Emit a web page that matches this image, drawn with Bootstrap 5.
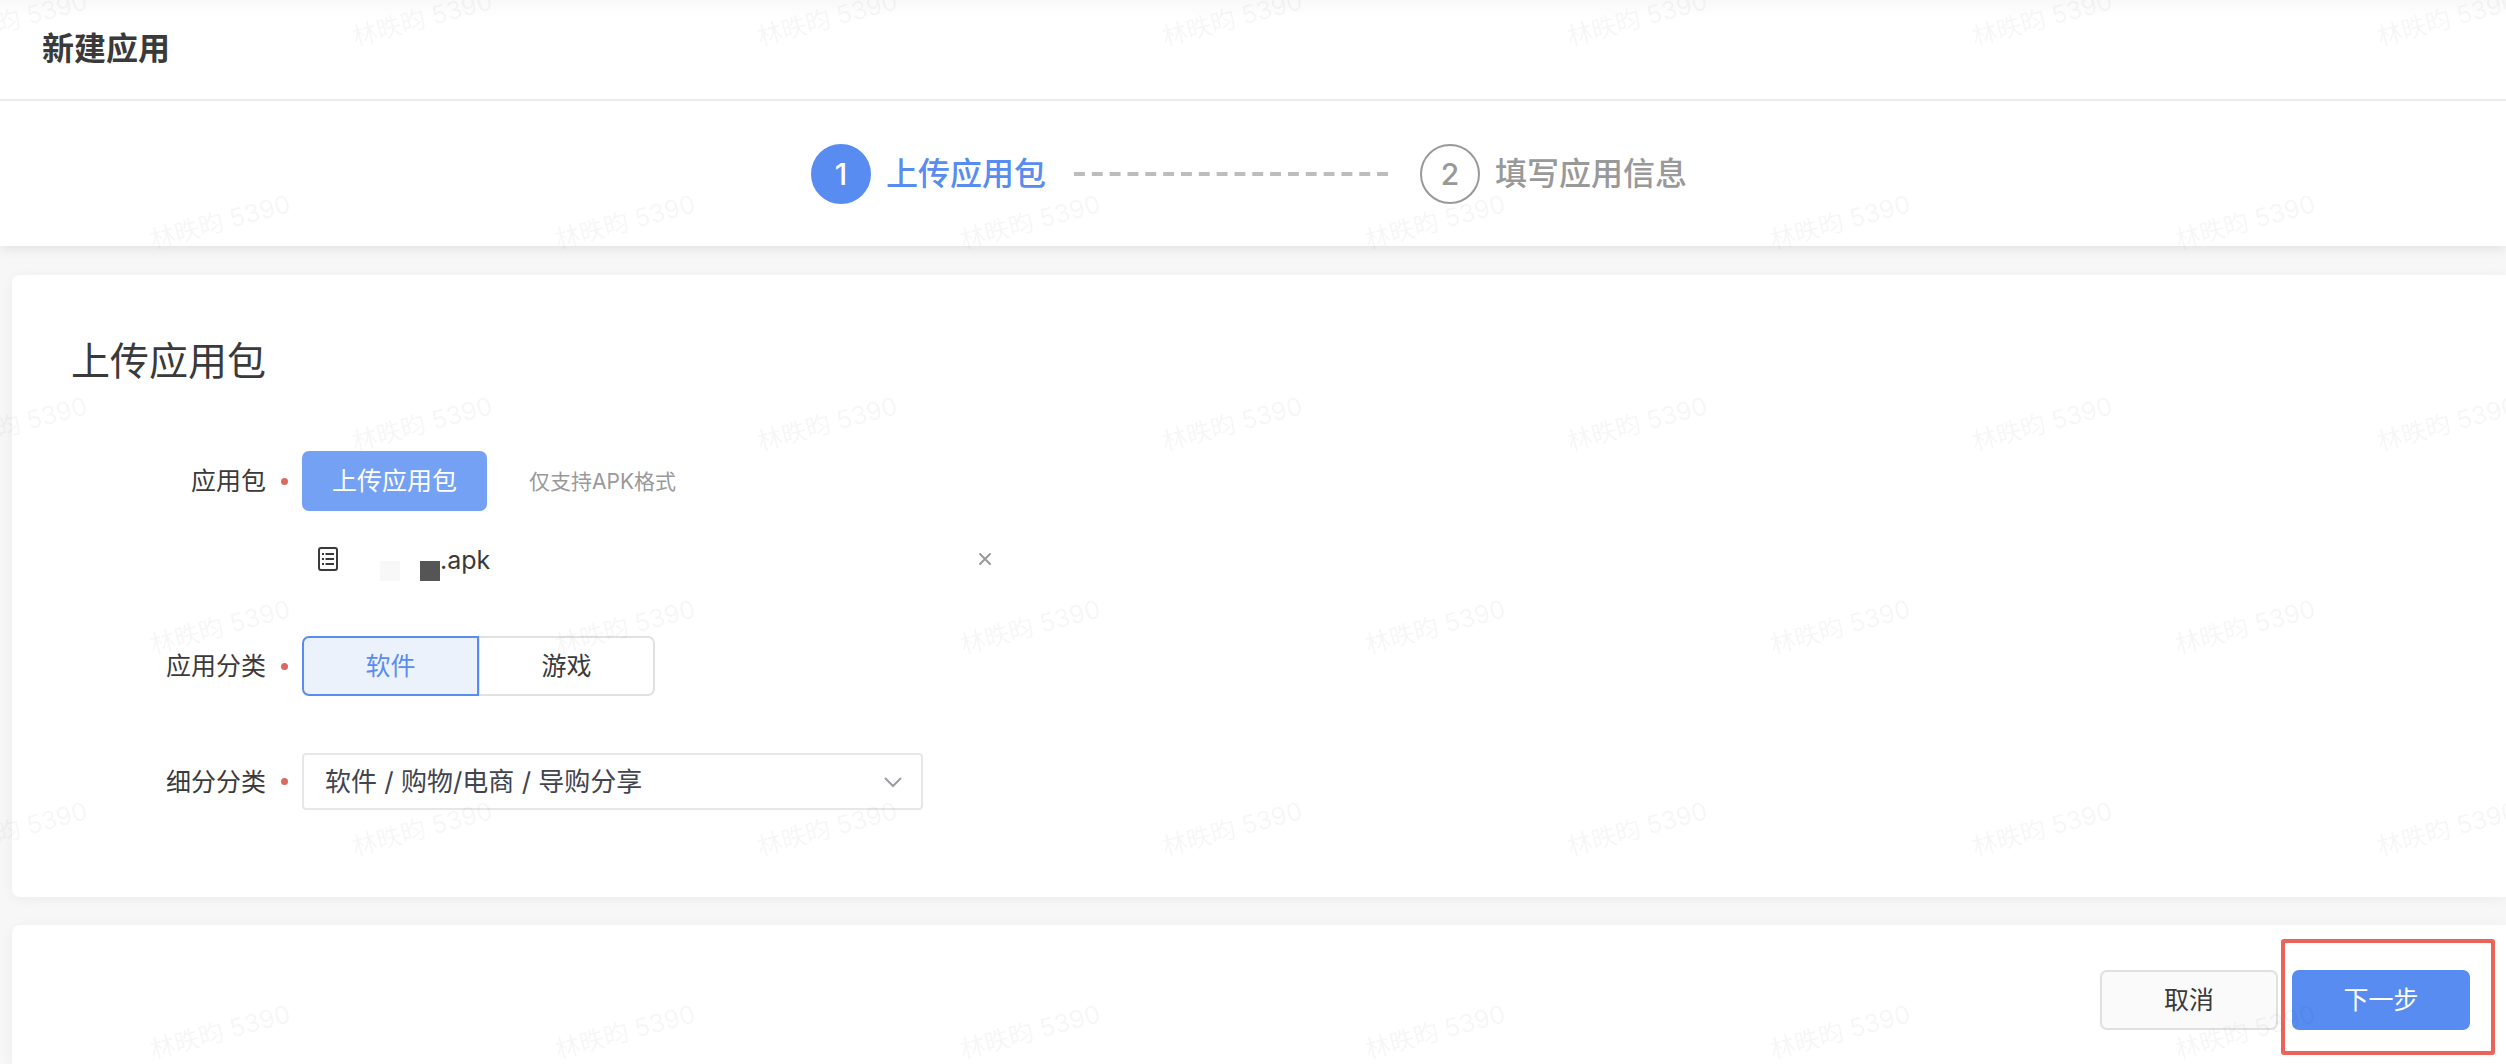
<!DOCTYPE html>
<html lang="zh-CN">
<head>
<meta charset="utf-8">
<meta name="viewport" content="width=device-width, initial-scale=1">
<title>新建应用</title>
<link href="https://cdn.jsdelivr.net/npm/bootstrap@5.3.0/dist/css/bootstrap.min.css" rel="stylesheet">
<style>
  :root { --brand: #588cf0; --ink: #3a3a3a; --muted: #999; --line: #e1e1e1; }
  body { font-family: Inter, "Noto Sans CJK SC", sans-serif; font-size: 25px; line-height: 36px; color: var(--ink); background: #f7f7f7; overflow-x: hidden; }
  .page-head { position: relative; z-index: 1; height: 101px; padding: 0 42px; border-bottom: 2px solid #ebebf1; background: linear-gradient(#f9f9f9, #fff 18px); }
  .page-head h1 { font-size: 32px; line-height: 48px; font-weight: 700; padding-top: 25px; }
  .step-bar { height: 145px; padding-right: 8px; background: #fff; box-shadow: 0 2px 12px rgba(0,0,0,.1); font-size: 32px; line-height: 48px; font-weight: 500; color: var(--muted); }
  .step-item { gap: 15px; }
  .step-item.current { color: var(--brand); }
  .step-no { width: 60px; height: 60px; border: 2px solid currentColor; font-size: 30px; }
  .current .step-no { background: var(--brand); border-color: var(--brand); color: #fff; }
  .step-line { width: 314px; height: 4px; margin: 0 32px 0 28px; }
  .panel { margin-left: 12px; background: #fff; border-radius: 8px 0 0 8px; box-shadow: 0 2px 14px rgba(0,0,0,.05); }
  .upload-panel { margin-top: 29px; padding: 62px 0 87px; }
  .upload-panel h2 { margin: 0 0 66px 59px; font-size: 39px; line-height: 48px; font-weight: 400; }
  .field-label { width: 290px; gap: 15px; padding-right: 14px; }
  .field-label::after { content: ""; width: 7px; height: 7px; border-radius: 50%; background: #db6960; }
  .ui-btn { height: 60px; padding: 0; border-width: 2px; border-radius: 7px; font-size: 25px; line-height: 36px; }
  .upload-btn, .upload-btn:hover { width: 185px; background: #74a1f3; border-color: #74a1f3; color: #fff; }
  .hint { margin-left: 42px; padding-top: 2px; font-size: 21px; color: var(--muted); }
  .file-row { height: 44px; margin: 26px 0 55px 290px; width: 706px; }
  .redact { width: 20px; height: 20px; }
  .redact-light { margin-left: 42px; background: #f8f8f8; }
  .redact-dark { margin-left: 20px; background: #555; }
  .file-name { padding-top: 2px; }
  .seg .ui-btn { width: 177px; padding-top: 10px; border-color: var(--line); color: var(--ink); }
  .seg .btn-check:checked + .ui-btn { background: #ecf2fc; border-color: var(--brand); color: var(--brand); z-index: 1; }
  .cat-row { margin-top: 57px; }
  .cat-select { width: 621px; height: 57px; padding: 0 60px 0 21px; border: 2px solid #e6e6eb; border-radius: 4px; font-size: 26px; line-height: 36px; color: #41454f; background: #fff url("data:image/svg+xml,%3Csvg xmlns='http://www.w3.org/2000/svg' viewBox='0 0 20 12'%3E%3Cpath d='M2 2l8 8 8-8' fill='none' stroke='%239a9da6' stroke-width='2'/%3E%3C/svg%3E") no-repeat right 18px center / 20px 12px; }
  .action-panel { margin-top: 28px; padding: 45px 36px 35px 0; gap: 14px; border-bottom-left-radius: 0; }
  .action-panel .ui-btn { width: 178px; }
  .cancel-btn, .cancel-btn:hover { background: #fafafa; border-color: #e0e0e0; color: var(--ink); }
  .next-btn, .next-btn:hover { background: var(--brand); border-color: var(--brand); color: #fff; }
  .callout-frame { position: absolute; inset: -31px -25px -25px -11px; border: 4px solid #ed6359; border-radius: 3px; pointer-events: none; }
  .watermark { position: fixed; inset: 0; z-index: 10; pointer-events: none; font-size: 25px; fill: #000; fill-opacity: .035; }
</style>
<script src="https://cdn.jsdelivr.net/npm/bootstrap@5.3.0/dist/js/bootstrap.bundle.min.js"></script>
</head>
<body class="min-vh-100 d-flex flex-column">
<header class="page-head"><h1 class="m-0">新建应用</h1></header>

<nav class="step-bar d-flex justify-content-center align-items-center" aria-label="步骤">
  <div class="step-item current d-flex align-items-center" aria-current="step">
    <span class="step-no rounded-circle d-flex justify-content-center align-items-center">1</span><span>上传应用包</span>
  </div>
  <svg class="step-line" aria-hidden="true"><line x1="0" y1="2" x2="314" y2="2" pathLength="317" stroke="#bdbdbd" stroke-width="4" stroke-dasharray="11 7"/></svg>
  <div class="step-item d-flex align-items-center">
    <span class="step-no rounded-circle d-flex justify-content-center align-items-center">2</span><span>填写应用信息</span>
  </div>
</nav>

<main class="flex-fill d-flex flex-column">
  <form class="flex-fill d-flex flex-column">
    <section class="panel upload-panel">
      <h2>上传应用包</h2>
      <div class="d-flex align-items-center">
        <label class="field-label d-flex justify-content-end align-items-center" for="upload">应用包</label>
        <button id="upload" type="button" class="btn ui-btn upload-btn">上传应用包</button>
        <span class="hint">仅支持APK格式</span>
      </div>
      <div class="file-row d-flex align-items-center px-3">
        <svg width="20" height="24" viewBox="0 0 20 24" fill="none" stroke="#3a3a3a" stroke-width="2" aria-hidden="true"><rect x="1" y="1" width="18" height="22" rx="2"/><path d="M4 7h2M7.500 7H16M4 12h2M7.500 12H16M4 17h2M7.500 17H16"/></svg>
        <span class="redact redact-light align-self-end"></span>
        <span class="redact redact-dark align-self-end"></span>
        <span class="file-name">.apk</span>
        <button type="button" class="btn p-0 border-0 ms-auto d-flex" aria-label="删除文件"><svg width="14" height="14" viewBox="0 0 14 14" stroke="#999" stroke-width="2" stroke-linecap="round"><path d="M2 2l10 10M12 2L2 12"/></svg></button>
      </div>
      <div class="d-flex align-items-center">
        <span id="kind" class="field-label d-flex justify-content-end align-items-center">应用分类</span>
        <div class="btn-group seg" role="group" aria-labelledby="kind">
          <input class="btn-check" type="radio" name="kind" id="soft" checked><label class="btn ui-btn" for="soft">软件</label>
          <input class="btn-check" type="radio" name="kind" id="game"><label class="btn ui-btn" for="game">游戏</label>
        </div>
      </div>
      <div class="cat-row d-flex align-items-center">
        <label class="field-label d-flex justify-content-end align-items-center" for="cat">细分分类</label>
        <select id="cat" class="form-select cat-select"><option>软件 / 购物/电商 / 导购分享</option></select>
      </div>
    </section>

    <section class="panel action-panel flex-fill d-flex justify-content-end align-items-start">
      <button type="button" class="btn ui-btn cancel-btn">取消</button>
      <div class="position-relative d-flex">
        <button type="submit" class="btn ui-btn next-btn">下一步</button>
        <span class="callout-frame"></span>
      </div>
    </section>
  </form>
</main>

<svg class="watermark w-100 h-100" aria-hidden="true"></svg>
<script>
  // Staggered grid of user marks, repeated to cover the window
  const mark = document.querySelector('.watermark');
  for (let row = 0, y = 45; y < innerHeight + 20; row++, y = 45 + Math.round(row * 405 / 2)) {
    for (let x = row % 2 ? 153 : -50; x < innerWidth; x += 405) {
      const t = document.createElementNS('http://www.w3.org/2000/svg', 'text');
      t.setAttribute('transform', `translate(${x} ${y + 1}) rotate(-15)`);
      t.textContent = '林昳昀 5390';
      mark.append(t);
    }
  }
</script>
</body>
</html>
